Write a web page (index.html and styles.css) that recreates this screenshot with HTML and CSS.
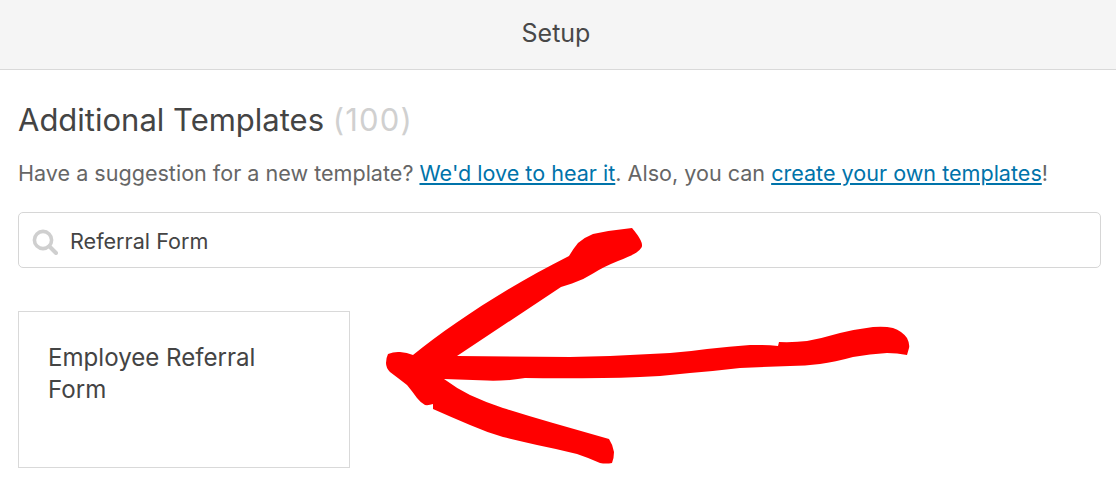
FILE: index.html
```html
<!DOCTYPE html>
<html lang="en">
<head>
<meta charset="utf-8">
<title>Setup</title>
<link rel="stylesheet" href="styles.css">
</head>
<body>
<header class="topbar">Setup</header>
<main class="content">
  <h1 class="title">Additional Templates <span class="count">(100)</span></h1>
  <p class="intro">Have a suggestion for a new template? <a href="#">We'd love to hear it</a>. Also, you can <a href="#">create your own templates</a>!</p>
  <div class="search">
    <svg class="search-icon" viewBox="0 0 26 26" aria-hidden="true"><circle cx="11" cy="11" r="8.6" fill="none" stroke="#cfcfcf" stroke-width="3.6"/><path d="M17.5 17.5L24 24" stroke="#cfcfcf" stroke-width="4" stroke-linecap="round"/></svg>
    <span class="search-text">Referral Form</span>
  </div>
  <div class="card">Employee Referral Form</div>
</main>
<svg class="arrow" viewBox="0 0 1116 492" aria-hidden="true"><path fill="#ff0000" d="M632,228 Q638,235 640.5,240 Q643,245 641.5,247.5 Q640,250 636.5,252.5 Q633,255 618,261 Q603,267 593,273.5 Q583,280 572,283.5 L561,287 L457,356 L570,357 Q620,356 670,353 Q690,351.5 707,349 Q730,346.5 750,345 Q765,344.5 778,346 L779,342 Q795,342.5 807,341 Q823,338 840,333 Q857,329 873,327 Q885,326 893,328 Q902,331 907,338 Q910,344 909,348 L907,355 Q897,353 887,353 Q870,354 853,357 Q835,362 820,364 Q805,366 790,366 Q765,367 740,368 Q715,371 690,373 Q665,376 640,377 Q620,378 603,378 Q560,378.5 525,378 Q518,379 510,380 Q495,381 487,380.5 L444,379 Q456,388 470,395 Q485,402 503,408 Q528,416 553,423 L609,439 Q613,445 614,452 Q614,458 612,463 Q606,464 600,463 Q589,458 577,454 Q557,449 537,445 Q520,441 503,437 Q486,432 470,425 Q451,417 433,409 L433,404 Q429,405.5 425,405 Q420,402 417,398 Q412,391 407,385 Q398,378 390,372 Q386,368 386,363 Q386,358 388,354 Q394,351.5 400,352 Q407,352.5 413,355 C450,325 505,288 569,256 Q573,249 578,243 Q585,237 593,234 Q612,230 632,228 Z"/></svg>
</body>
</html>
```

FILE: styles.css
```css
* { box-sizing: border-box; }
html, body { margin: 0; padding: 0; }
body {
  width: 1116px;
  height: 492px;
  overflow: hidden;
  position: relative;
  background: #fff;
  font-family: Inter, "Liberation Sans", sans-serif;
  color: #444;
}
.topbar {
  height: 70px;
  background: #f5f5f5;
  border-bottom: 1px solid #d9d9d9;
  display: flex;
  align-items: center;
  justify-content: center;
  font-size: 25px;
  padding-bottom: 4px;
  padding-right: 4px;
  color: #484848;
}
.content { padding: 30px 15px 0 18px; }
.title {
  margin: 0;
  font-size: 31px;
  line-height: 40px;
  font-weight: 400;
  color: #444;
}
.count { color: #d0d0d0; letter-spacing: 1.2px; }
.intro {
  margin: 20px 0 0;
  font-size: 21.57px;
  line-height: 26px;
  color: #666;
}
.intro a { color: #0073aa; text-decoration: underline; }
.search {
  margin-top: 26px;
  height: 56px;
  border: 1px solid #d6d6d6;
  border-radius: 5px;
  display: flex;
  align-items: center;
  padding-left: 13px;
  gap: 12px;
}
.search-icon { width: 26px; height: 26px; margin-top: 3px; }
.search-text { font-size: 21.6px; color: #444; padding-top: 1px; }
.card {
  margin-top: 43px;
  width: 332px;
  height: 157px;
  border: 1px solid #d9d9d9;
  padding: 30px 60px 0 29px;
  font-size: 24.1px;
  line-height: 32px;
  color: #444;
}
.arrow { position: absolute; left: 0; top: 0; width: 1116px; height: 492px; }
```
